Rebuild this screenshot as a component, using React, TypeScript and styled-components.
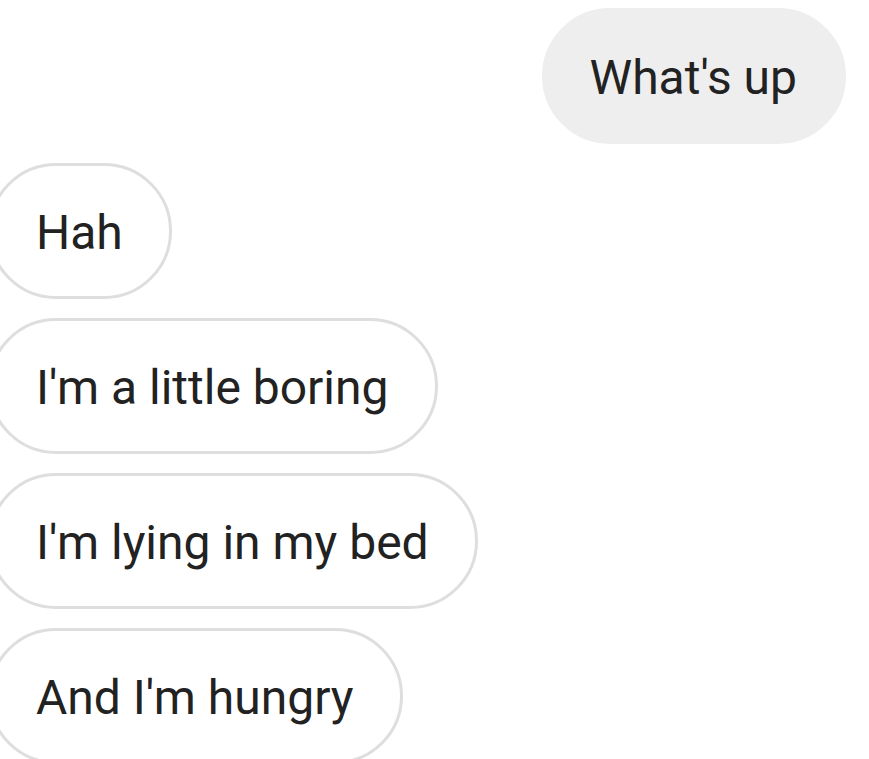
import * as React from "react";
import styled, { createGlobalStyle } from "styled-components";

const GlobalStyle = createGlobalStyle`
  html, body {
    margin: 0;
    padding: 0;
    background: #ffffff;
    overflow: hidden;
  }
`;

type Message = { id: number; text: string; mine: boolean };

const messages: Message[] = [
  { id: 1, text: "What's up", mine: true },
  { id: 2, text: "Hah", mine: false },
  { id: 3, text: "I'm a little boring", mine: false },
  { id: 4, text: "I'm lying in my bed", mine: false },
  { id: 5, text: "And I'm hungry", mine: false },
];

const App: React.FC = () => (
  <>
    <GlobalStyle />
    <Thread>
      {messages.map(({ id, text, mine }) => (
        <Bubble key={id} mine={mine}>
          {text}
        </Bubble>
      ))}
    </Thread>
  </>
);

export default App;

const Thread = styled.div`
  display: flex;
  flex-direction: column;
  gap: 19px;
  padding: 8px 23px 0 0;
  width: 869px;
  height: 759px;
  box-sizing: border-box;
  overflow: hidden;
  font-family: Roboto, "Noto Sans", sans-serif;
`;

const Bubble = styled.div<{ mine: boolean }>`
  display: flex;
  align-items: center;
  flex-shrink: 0;
  box-sizing: border-box;
  height: 136px;
  padding: 2px 46px 0 45px;
  border-radius: 68px;
  font-size: 48px;
  color: #222222;
  white-space: nowrap;
  align-self: ${({ mine }) => (mine ? "flex-end" : "flex-start")};
  margin-left: ${({ mine }) => (mine ? "0" : "-12px")};
  background: ${({ mine }) => (mine ? "#eeeeee" : "#ffffff")};
  border: 3px solid ${({ mine }) => (mine ? "#eeeeee" : "#dedede")};
`;
